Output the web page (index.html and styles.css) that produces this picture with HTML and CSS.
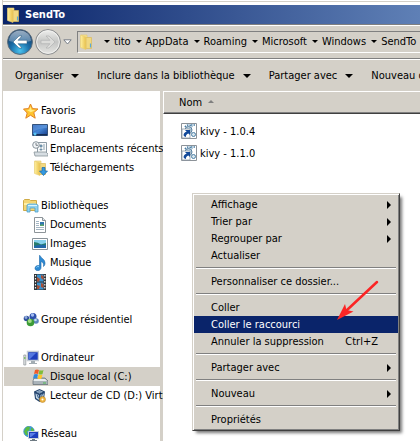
FILE: index.html
```html
<!DOCTYPE html>
<html lang="fr">
<head>
<meta charset="utf-8">
<title>SendTo</title>
<link rel="stylesheet" href="styles.css">
</head>
<body>
<svg class="defs" aria-hidden="true">
  <defs>
    <linearGradient id="gold" x1="0" x2="1"><stop offset="0" stop-color="#fff0a0"/><stop offset="1" stop-color="#e8c04a"/></linearGradient>
    <linearGradient id="sky" x1="0" y1="0" x2="1" y2="1"><stop offset="0" stop-color="#1d51ae"/><stop offset=".5" stop-color="#4384d4"/><stop offset="1" stop-color="#173a86"/></linearGradient>
    <radialGradient id="orb" cy=".85" r=".75"><stop offset="0" stop-color="#49c2ee"/><stop offset=".5" stop-color="#1c70aa"/><stop offset="1" stop-color="#123a66"/></radialGradient>
    <linearGradient id="shine" x2="0" y2="1"><stop offset="0" stop-color="#e3edf5"/><stop offset="1" stop-color="#7396b8"/></linearGradient>
    <linearGradient id="pale" x2="0" y2="1"><stop offset="0" stop-color="#f0f0ee"/><stop offset=".5" stop-color="#c4c5c4"/><stop offset="1" stop-color="#e6e6e3"/></linearGradient>
    <symbol id="folder" viewBox="0 0 16 16">
      <path d="M3 1h6v12H3z" fill="#f8e58d" stroke="#e0c469" stroke-width=".6"/>
      <path d="M8 3.500h5.500v11H8z" fill="#f1d880" stroke="#dbba5c" stroke-width=".7"/>
      <path d="M2.500 1l5.500 2v12.500l-5.500-2z" fill="url(#gold)" stroke="#e8cc72" stroke-width=".6"/>
      <path d="M12.500 9.500v4" stroke="#58a9d8" stroke-width="1.200"/>
    </symbol>
    <symbol id="screen" viewBox="0 0 16 16">
      <path d="M4.500 1.500h11v9h-11z" fill="#1d3fbd" stroke="#c4ccd4" stroke-width="1.500"/>
      <path d="M6 3h7L7 9H6z" fill="#5277e0"/><path d="M8 11h4v2h2v1H6v-1h2z" fill="#a3adb3"/>
      <path d="M.8 5h2v10h-2z" fill="#e2e6e8" stroke="#8b9297" stroke-width=".7"/><path d="M1.800 7v2" stroke="#62b83e"/>
    </symbol>
    <symbol id="shortcut" viewBox="0 0 16 16">
      <path d="M.5.5h15v15H.5z" fill="#fff" stroke="#8c9298"/>
      <path d="M4 4a4 4 0 0 1 7 0M10 2h5" fill="none" stroke="#467da5" stroke-width="1.500" stroke-dasharray="1.500 1"/>
      <circle cx="7.500" cy="7" r="3.500" fill="#b8d0df" stroke="#597f9e"/>
      <circle cx="12.500" cy="11.500" r="2" fill="#d8e7ef" stroke="#4c7fa5"/>
      <path d="M1 6h8v9H1z" fill="#fff" stroke="#8d9aa5" stroke-width=".8"/>
      <path d="M4 7h5v5L7.500 10.500Q4.500 11.500 5 14 1.500 13 3 10.500 4 9 5.700 8.700z" fill="#12499a"/>
    </symbol>
  </defs>
</svg>

<div class="window">
  <header class="title">
    <svg class="icon"><use href="#folder"/></svg>
    <h1>SendTo</h1>
  </header>

  <nav class="address" aria-label="Adresse">
    <button class="orb" aria-label="Précédent"><svg viewBox="0 0 26 26">
      <circle cx="13" cy="13" r="12.400" fill="url(#orb)" stroke="#596a79"/>
      <path d="M2 12a11 10.500 0 0 1 22 0Q13 15 2 12z" fill="url(#shine)" opacity=".65"/>
      <path d="M12 7l-6 6 6 6h3l-4-4.300h9v-3.400h-9L15 7z" fill="#fff" stroke="#285577" stroke-width=".5"/>
    </svg></button>
    <button class="orb" aria-label="Suivant"><svg viewBox="0 0 26 26">
      <circle cx="13" cy="13" r="12.400" fill="url(#pale)" stroke="#858789"/>
      <circle cx="13" cy="13" r="11.300" fill="none" stroke="#f1f1ef"/>
      <path d="M14 7l6 6-6 6h-3l4-4.300H6v-3.400h9L11 7z" fill="#dcdcda" stroke="#b2b3b3" stroke-width=".7"/>
    </svg></button>
    <button class="recent" aria-label="Pages récentes"><svg viewBox="0 0 9 6"><path d="M.8.800h7.400L4.500 5z" fill="#fff" stroke="#777d87"/></svg></button>
    <div class="path">
      <svg class="icon"><use href="#folder"/></svg>
      <span class="down first"></span><a href="#">tito</a>
      <span class="down"></span><a href="#">AppData</a>
      <span class="down"></span><a href="#">Roaming</a>
      <span class="down"></span><a href="#">Microsoft</a>
      <span class="down"></span><a href="#">Windows</a>
      <span class="down"></span><a href="#">SendTo</a>
    </div>
  </nav>

  <div class="toolbar">
    <button>Organiser<span class="down big"></span></button>
    <button>Inclure dans la bibliothèque<span class="down big"></span></button>
    <button>Partager avec<span class="down big"></span></button>
    <button>Nouveau dossier</button>
  </div>

  <div class="body">
    <nav class="side" aria-label="Emplacements">
      <ul>
        <li><a href="#"><svg class="icon" viewBox="0 0 16 16"><path d="M7.500 1l2 4.600 5.500.4-4.200 3.600 1.400 5.600-4.700-3-4.700 3L4.200 10 .5 6l5-.4z" fill="#ffc52e" stroke="#e28325"/><path d="M7.500 3.500L8.700 7l3.500.2-4.500 2L4 7l2.300-.3z" fill="#ffec8a"/></svg>Favoris</a></li>
        <li><a class="sub" href="#"><svg class="icon" viewBox="0 0 16 16"><path d="M.5 2.500h15v11H.5z" fill="url(#sky)" stroke="#35537c"/><path d="M1 3h14v3Q7 6 1 10z" fill="#6ea1e1" opacity=".5"/><path d="M1 12h14v1.500H1z" fill="#152e56"/><circle cx="3" cy="12" r="1.500" fill="#58c1f0"/></svg>Bureau</a></li>
        <li><a class="sub" href="#"><svg class="icon" viewBox="0 0 16 16"><path d="M5.500 1.500h9v10h-9z" fill="#f8fafb" stroke="#8d9ba5"/><path d="M8 4h2v2H8zM11 4h2M11 6h2M8 8h2v1H8zM11 8h2" fill="#6c9fc4" stroke="#708b9e" stroke-width=".8"/><path d="M2 11h12l2 2v2H3z" fill="#d6dde2" stroke="#89949b" stroke-width=".8"/><circle cx="4" cy="4" r="3.300" fill="#f2f5f7" stroke="#89949b"/><path d="M4 2v2.300h2" fill="none" stroke="#5e6870" stroke-width=".8"/></svg>Emplacements récents</a></li>
        <li><a class="sub" href="#"><svg class="icon" viewBox="0 0 16 16"><use href="#folder"/><path d="M10 7.500h3V11h2.500l-4 4.500-4-4.500H10z" fill="#3599df" stroke="#1868ac" stroke-width=".7"/></svg>Téléchargements</a></li>
      </ul>
      <ul>
        <li><a href="#"><svg class="icon" viewBox="0 0 16 16"><path d="M.5 2.500l1-1h5l1 1h6v10H.5z" fill="#f3d675" stroke="#cfab47"/><path d="M1 5h12v2H1z" fill="#fff0a6"/><path d="M4 14V7l2-1h7l2 1v7h-3v-4H7v4z" fill="#8fd2ef" stroke="#4e9fc8" stroke-width=".8"/><path d="M5 7.500h9" stroke="#dcf5fd"/></svg>Bibliothèques</a></li>
        <li><a class="sub" href="#"><svg class="icon" viewBox="0 0 16 16"><path d="M2.500.5h8l3 3v12h-11z" fill="#fff" stroke="#8d9499"/><path d="M10.500.5v3h3" fill="#dfe5e9" stroke="#8d9499"/><path d="M4 4.500h3M4 6.500h3M4 8.500h3M4 10.500h8M4 12.500h8" stroke="#a4b6c4"/><path d="M8 5h4v4H8z" fill="#3175af"/><path d="M8 8l2-1 2 1v1H8z" fill="#58a36d"/></svg>Documents</a></li>
        <li><a class="sub" href="#"><svg class="icon" viewBox="0 0 16 16"><path d="M.5 2.500h15v11H.5z" fill="#fff" stroke="#899299"/><path d="M2 4h12v8H2z" fill="#86d1ed"/><path d="M2 6q4 0 7 2.500L14 7v3H2z" fill="#287d6c"/><path d="M2 10q6-2 12-1v3H2z" fill="#2168a8"/></svg>Images</a></li>
        <li><a class="sub" href="#"><svg class="icon" viewBox="0 0 16 16"><path d="M8 .5c1 3 5 3.500 5 7.500 0 1.500-.5 2.500-1.500 3.500.5-3-.5-4.500-2.500-5v6c0 4-6 4-6 .8C3 11 5.500 10 7.500 10.800V.5z" fill="#2d8ad3" stroke="#1967aa" stroke-width=".6"/><path d="M4.500 12.500q1-1.500 2.500-.8" stroke="#8bd4ff" fill="none"/></svg>Musique</a></li>
        <li><a class="sub" href="#"><svg class="icon" viewBox="0 0 16 16"><path d="M2 0h12v16H2z" fill="#303539"/><path d="M5 .5h6.500v7H5zM5 8.500h6.500v7H5z" fill="#3c93cf"/><path d="M5 3l3 2-1 2.500H5zM9 1l2.500 1v4L9 4zM5 11l3 1-1 3H5zM9 9l2.500 1v4L9 13z" fill="#a84f35"/><path d="M3.500 1v14M12.800 1v14" stroke="#eee" stroke-width="1.200" stroke-dasharray="1.500 1.500"/></svg>Vidéos</a></li>
      </ul>
      <ul>
        <li><a href="#"><svg class="icon" viewBox="0 0 16 16"><circle cx="3.500" cy="6.500" r="2.800" fill="#31509c"/><circle cx="3" cy="5.500" r="1.400" fill="#8eabdd"/><circle cx="10" cy="4.500" r="3.500" fill="#2e50ac"/><circle cx="9.500" cy="3" r="1.700" fill="#a2bcf0"/><circle cx="13" cy="9" r="2.800" fill="#5c84bd"/><circle cx="12.500" cy="8" r="1.300" fill="#c3dff0"/><circle cx="7.500" cy="10.500" r="3.800" fill="#3c9b37"/><circle cx="6.800" cy="9" r="2" fill="#a5dc88"/></svg>Groupe résidentiel</a></li>
      </ul>
      <ul>
        <li><a href="#"><svg class="icon"><use href="#screen"/></svg>Ordinateur</a></li>
        <li><a class="sub selected" href="#" aria-current="true"><svg class="icon" viewBox="0 0 16 16"><path d="M2 9h11l3 3v3.500H1V12z" fill="#aab3b9" stroke="#69747b" stroke-width=".8"/><path d="M2 10h11l2 2H1.500z" fill="#e7ecee"/><path d="M11 14h3" stroke="#4dba51"/><path d="M3 1q2-1 4 0L6 5Q4 4 2 5z" fill="#f05b28"/><path d="M7.500 1q2 1 4 0l-1 4q-2 1-4 0z" fill="#7fbd38"/><path d="M2 5.500q2-1 4 0l-1 4q-2-1-4 0z" fill="#2f8bdb"/><path d="M6.500 5.500q2 1 4 0l-1 4q-2 1-4 0z" fill="#ffc629"/></svg>Disque local (C:)</a></li>
        <li><a class="sub" href="#"><svg class="icon" viewBox="0 0 16 16"><path d="M2 3.500L7.500 1 13 3.500l-1 7.500-4.500 3L3 11z" fill="#26466f"/><path d="M4 3.800l3.500-1.500L11 3.800 7.500 5.500zM3.500 5.500L6.800 7v5L4 10zM11.800 5.500L8.500 7v3l3-2z" fill="#c6d9e9"/><path d="M5 6.500l1.500 3.500M10.500 6L9 9.500M5.500 4h4" stroke="#385f8c"/><circle cx="10.500" cy="11.500" r="3" fill="#f0b53d" stroke="#b98636" stroke-width=".6"/><circle cx="10.500" cy="11.500" r="1" fill="#fff"/></svg>Lecteur de CD (D:) VirtualBox</a></li>
      </ul>
      <ul>
        <li><a href="#"><svg class="icon" viewBox="0 0 16 16"><circle cx="6" cy="5.500" r="5.300" fill="#3e9fdd" stroke="#267abb" stroke-width=".6"/><path d="M3 1.500q3-2 4 0l-1 3-2 1 1 3-2 1-2-4zM8 1.500l3 2-1 3-2-2z" fill="#5bbb42"/><path d="M5.500 5.500h10v7h-10z" fill="#1d3fbd" stroke="#c8d1d8"/><path d="M7 7h6l-5 4H7z" fill="#597ee7"/><path d="M9 13h3v1h2v1H7v-1h2z" fill="#6e7a83"/></svg>Réseau</a></li>
      </ul>
    </nav>

    <main class="files">
      <table>
        <thead><tr><th scope="col">Nom<span class="sort"></span></th></tr></thead>
        <tbody>
          <tr><td><div class="file"><svg class="icon"><use href="#shortcut"/></svg>kivy - 1.0.4</div></td></tr>
          <tr><td><div class="file"><svg class="icon"><use href="#shortcut"/></svg>kivy - 1.1.0</div></td></tr>
        </tbody>
      </table>
    </main>
  </div>
</div>

<div class="menu" role="menu">
  <button role="menuitem">Affichage<span class="more"></span></button>
  <button role="menuitem">Trier par<span class="more"></span></button>
  <button role="menuitem">Regrouper par<span class="more"></span></button>
  <button role="menuitem">Actualiser</button>
  <hr>
  <button role="menuitem">Personnaliser ce dossier...</button>
  <hr>
  <button role="menuitem">Coller</button>
  <button role="menuitem" class="active">Coller le raccourci</button>
  <button role="menuitem">Annuler la suppression<kbd>Ctrl+Z</kbd></button>
  <hr>
  <button role="menuitem">Partager avec<span class="more"></span></button>
  <hr>
  <button role="menuitem">Nouveau<span class="more"></span></button>
  <hr>
  <button role="menuitem">Propriétés</button>
</div>
<svg class="pointer" viewBox="0 0 42 41" aria-hidden="true"><path d="M40 2L10 30" stroke="#fb2525" stroke-width="2.500" stroke-linecap="round"/><path d="M0 40L8 24l1.500 6 7 1.500z" fill="#fb2525"/></svg>
</body>
</html>
```
FILE: styles.css
```css
* { box-sizing: border-box; }

body {
  margin: 0;
  height: 100vh;
  overflow: hidden;
  background: #fff;
  color: #000;
  font: 11px/17px Tahoma, "DejaVu Sans Condensed", "DejaVu Sans", sans-serif;
}

button {
  margin: 0;
  padding: 0;
  border: 0;
  background: none;
  color: inherit;
  font: inherit;
  white-space: nowrap;
}

a { color: inherit; text-decoration: none; white-space: nowrap; }
ul { list-style: none; margin: 0; padding: 0; }
.defs { position: absolute; width: 0; height: 0; }
.icon { width: 16px; height: 16px; flex: none; }

.window {
  display: flex;
  flex-direction: column;
  height: 100%;
  margin-left: 2px;
  border-left: 1px solid #d4d0c8;
  padding-top: 1px;
}

.title {
  display: flex;
  align-items: center;
  gap: 4px;
  flex: none;
  height: 23px;
  padding-left: 2px;
  border-top: 1px solid #d4d0c8;
  box-shadow: inset 0 3px #fff;
  padding-top: 3px;
  background: linear-gradient(90deg, #0a246a, #5f80b6);
  color: #fff;
}
.title h1 { margin: 0; font-size: 11px; font-weight: bold; }

.address {
  display: flex;
  align-items: center;
  flex: none;
  height: 35px;
  padding-left: 4px;
  background: #d4d0c8;
  border-top: 1px solid #808080;
  border-bottom: 1px solid #808080;
  box-shadow: inset 0 1px #fff;
}
.orb { width: 26px; height: 26px; margin-right: 2px; }
.orb svg, .recent svg { display: block; width: 100%; }
.recent { width: 9px; margin-right: 5px; }

.path {
  display: flex;
  align-items: center;
  flex: 1;
  min-width: 0;
  height: 22px;
  overflow: hidden;
  border: 1px solid #808080;
  border-right: 0;
  border-bottom-color: #fff;
}

.down {
  flex: none;
  margin: 0 4px 0 5px;
  border: 3px solid transparent;
  border-top-color: #000;
  border-bottom: 0;
}
.down.first { margin-left: 10px; }
.down.big { margin: 0 0 0 8px; border-width: 4px 4px 0; }

.toolbar {
  display: flex;
  align-items: center;
  gap: 18px;
  flex: none;
  height: 32px;
  padding-left: 12px;
  overflow: hidden;
  background: #d4d0c8;
  border-top: 1px solid #fff;
}
.toolbar button { display: flex; align-items: center; flex: none; }

.body { display: flex; flex: 1; min-height: 0; }

.side {
  flex: 0 0 160px;
  min-width: 0;
  padding-top: 10px;
  overflow: clip;
  overflow-clip-margin: border-box;
  border-right: 3px solid #d4d0c8;
}
.side ul { margin-bottom: 19px; }
.side a {
  display: flex;
  align-items: center;
  gap: 2px;
  height: 19px;
  padding-left: 20px;
}
.side a.sub { padding-left: 29px; }
.side a.selected { background: #d4d0c8; margin-left: 1px; padding-left: 28px; }

.files { flex: 1; min-width: 0; overflow: hidden; }
.files table { width: 100%; border-collapse: separate; border-spacing: 0; }
.files th {
  height: 23px;
  padding: 0 0 0 15px;
  background: #d4d0c8;
  border-top: 1px solid #fff;
  border-left: 1px solid #fff;
  border-bottom: 1px solid #404040;
  box-shadow: inset 0 -1px #808080;
  font-weight: normal;
  text-align: left;
}
.files td { padding: 0 0 0 18px; }
.files tbody::before { content: ""; display: block; height: 6px; }
.file { display: flex; align-items: center; gap: 3px; height: 22px; }

.sort {
  display: inline-block;
  margin-left: 6px;
  border: 3px solid transparent;
  border-top: 0;
  border-bottom-color: #808080;
  vertical-align: 3px;
}

.menu {
  position: absolute;
  left: 192px;
  top: 193px;
  width: 208px;
  padding: 1px;
  background: #d4d0c8;
  border: 1px solid;
  border-color: #d4d0c8 #404040 #404040 #d4d0c8;
  box-shadow: inset 1px 1px #fff, inset -1px -1px #808080, 3px 3px 3px -1px #777;
}
.menu button {
  display: flex;
  align-items: center;
  justify-content: space-between;
  width: 100%;
  height: 17px;
  padding: 0 7px 0 17px;
}
.menu button:first-child { margin-top: 1px; }
.menu button:last-child { margin-bottom: 1px; }
.menu button.active { background: #0a246a; color: #fff; }
.menu kbd { font: inherit; margin-right: 13px; }
.menu hr {
  height: 2px;
  margin: 3px 2px 4px;
  border: 0;
  border-top: 1px solid #808080;
  border-bottom: 1px solid #fff;
}

.more {
  border: 4px solid transparent;
  border-left-color: #000;
  border-right: 0;
}

.pointer { position: absolute; left: 337px; top: 280px; width: 42px; height: 41px; }
```
